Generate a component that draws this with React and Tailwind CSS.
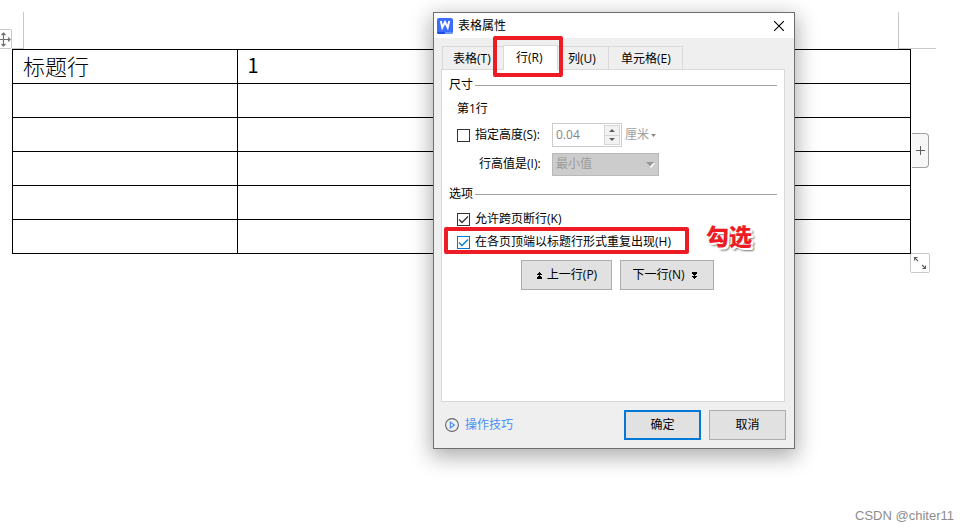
import React from 'react';

const rows = [['标题行', '1', '', ''], ['', '', '', ''], ['', '', '', ''], ['', '', '', ''], ['', '', '', ''], ['', '', '', '']];

function CheckBox({ id, checked, blue }) {
  return (
    <span className="relative flex size-[13px] shrink-0">
      <input
        id={id}
        type="checkbox"
        defaultChecked={checked}
        className={`peer size-[13px] appearance-none border bg-white ${blue ? 'border-[#0078d7]' : 'border-[#333333]'}`}
      />
      <svg
        viewBox="0 0 13 13"
        className={`pointer-events-none absolute inset-0 hidden size-[13px] peer-checked:block ${blue ? 'text-[#0078d7]' : 'text-[#333333]'}`}
        fill="none"
        stroke="currentColor"
        strokeWidth="1.3"
      >
        <path d="M2 6.5 5 9.5 11 3.5" />
      </svg>
    </span>
  );
}

function SectionTitle({ children }) {
  return (
    <div className="flex h-4 items-center gap-0.5">
      <h2>{children}</h2>
      <span className="h-px flex-1 bg-[#a0a0a0]" />
    </div>
  );
}

function Tab({ active, className, children }) {
  return (
    <button
      type="button"
      role="tab"
      aria-selected={!!active}
      className={`flex items-center whitespace-nowrap border-[#d9d9d9] ${
        active ? 'relative -mb-px h-[25px] border border-b-0 bg-white' : 'h-[23px] border-t bg-[#efefef] pt-0.5'
      } ${className}`}
    >
      {children}
    </button>
  );
}

function DoubleArrow({ down }) {
  return (
    <svg viewBox="0 0 7 7" className={`size-[7px] ${down ? 'rotate-180' : ''}`} fill="#000000" shapeRendering="crispEdges">
      <path d="M3 0H4V1H5V2H6V3H4V4H5V5H6V6H1V5H2V4H3V3H1V2H2V1H3ZM1 6H6V7H1Z" />
    </svg>
  );
}

function Dialog() {
  return (
    <section
      role="dialog"
      aria-label="表格属性"
      className="absolute top-3 left-[433px] flex w-[362px] flex-col border border-[#6e6e6e] bg-[#efefef] text-xs leading-4 text-black shadow-[0_6px_20px_2px_rgba(0,0,0,0.32)]"
    >
      <header className="flex h-[25px] items-center bg-white pl-[3px] pr-2.5">
        <svg viewBox="0 0 16 16" className="size-4">
          <rect width="16" height="16" rx="2" fill="#3c6cff" />
          <path d="M0 14H8V16H2Q0 16 0 14Z" fill="#1a4ee0" />
          <path d="M8 14H16Q16 16 14 16H8Z" fill="#6c95ff" />
          <path d="M3.8 3 5.3 9.6 8 4 10.7 9.6 12.2 3" fill="none" stroke="#ffffff" strokeWidth="2" />
        </svg>
        <h1 className="ml-[5px] flex-1">表格属性</h1>
        <button type="button" aria-label="关闭">
          <svg viewBox="0 0 10 10" className="size-2.5" fill="none" stroke="#000000" strokeWidth="1.1">
            <path d="M0 0 10 10M10 0 0 10" />
          </svg>
        </button>
      </header>

      <div className="px-[7px] pt-[7px]">
        <div role="tablist" className="relative flex items-end pl-px">
          <Tab className="w-[61px] border-l pl-2.5">表格(T)</Tab>
          <Tab active className="w-[55px] pl-3">行(R)</Tab>
          <Tab className="w-[51px] border-r pl-2.5">列(U)</Tab>
          <Tab className="w-[74px] border-r pl-3">单元格(E)</Tab>
          <span className="pointer-events-none absolute -top-[9px] left-[52px] z-10 h-[41px] w-[70px] rounded-[2px] border-4 border-[#ed1c24]" />
        </div>

        <div className="mr-0.5 h-[333px] border border-[#d9d9d9] bg-white px-[7px] pt-[7px]">
          <SectionTitle>尺寸</SectionTitle>
          <p className="mt-2 pl-2">第1行</p>
          <div className="mt-1.5 flex h-6 items-center pl-2">
            <CheckBox id="height" />
            <label htmlFor="height" className="ml-[5px] w-[77px] whitespace-nowrap">指定高度(S):</label>
            <div className="flex h-6 w-[70px] border border-[#cccccc] bg-white p-px">
              <input disabled aria-label="高度" defaultValue="0.04" className="w-full min-w-0 pl-0.5 text-[#838383]" />
              <div className="flex w-4 shrink-0 flex-col">
                <button type="button" disabled aria-label="增加" className="flex flex-1 items-center justify-center border border-[#d6d6d6] bg-[#f2f2f2]">
                  <svg viewBox="0 0 6 3" className="h-[3px] w-1.5" fill="#606060"><path d="M0 3 3 0 6 3Z" /></svg>
                </button>
                <button type="button" disabled aria-label="减少" className="flex flex-1 items-center justify-center border border-t-0 border-[#d6d6d6] bg-[#f2f2f2]">
                  <svg viewBox="0 0 6 3" className="h-[3px] w-1.5" fill="#606060"><path d="M0 0 3 3 6 0Z" /></svg>
                </button>
              </div>
            </div>
            <button type="button" disabled className="ml-[3px] flex items-center gap-0.5 text-[#a0a0a0]">
              厘米
              <svg viewBox="0 0 5 3" className="h-[3px] w-[5px]" fill="#888888"><path d="M0 0 2.5 3 5 0Z" /></svg>
            </button>
          </div>
          <div className="mt-[5px] flex h-6 items-center pl-[30px]">
            <label htmlFor="rule" className="w-[73px] whitespace-nowrap">行高值是(I):</label>
            <span className="relative">
              <select id="rule" disabled className="block h-[23px] w-[107px] appearance-none border border-[#b9b9b9] bg-[#cccccc] pl-[3px] text-[#9a9a9a] opacity-100">
                <option>最小值</option>
              </select>
              <svg viewBox="0 0 9 6" className="pointer-events-none absolute top-[9px] right-1 h-1.5 w-[9px]">
                <path d="M1 1H9L5 6Z" fill="#ffffff" />
                <path d="M0 0H8L4 4.5Z" fill="#969696" />
              </svg>
            </span>
          </div>
          <div className="mt-2.5">
            <SectionTitle>选项</SectionTitle>
          </div>
          <div className="mt-[9px] flex h-4 items-center gap-[5px] pl-2">
            <CheckBox id="break" checked />
            <label htmlFor="break">允许跨页断行(K)</label>
          </div>
          <div className="relative mt-[7px] flex h-4 items-center gap-[5px] pl-2">
            <CheckBox id="repeat" checked blue />
            <label htmlFor="repeat" className="whitespace-nowrap">在各页顶端以标题行形式重复出现(H)</label>
            <span className="pointer-events-none absolute -top-[7px] -left-[5px] h-[27px] w-[245px] rounded-[2px] border-4 border-[#ed1c24]" />
            <strong className="absolute -top-3.5 left-[257px] whitespace-nowrap text-[23px] leading-8 font-black text-[#ed1c24] [text-shadow:0_0_2px_#fff,1px_1px_0_#fff,2px_2px_0_#fff,3px_3px_2px_#777]">
              勾选
            </strong>
          </div>
          <div className="mt-2.5 flex gap-2 pl-[72px]">
            <button type="button" className="flex h-[30px] w-[91px] items-center justify-center gap-1 border border-[#adadad] bg-[#e1e1e1]">
              <DoubleArrow /> 上一行(P)
            </button>
            <button type="button" className="flex h-[30px] w-[94px] items-center justify-center gap-1.5 border border-[#adadad] bg-[#e1e1e1] pr-1">
              下一行(N) <DoubleArrow down />
            </button>
          </div>
        </div>
      </div>

      <footer className="flex items-center gap-2 px-2 pt-2 pb-2">
        <a href="#tips" className="ml-[3px] mr-auto flex items-center gap-1.5 text-[#4a90f5]">
          <svg viewBox="0 0 14 14" className="size-3.5" fill="none">
            <circle cx="7" cy="7" r="6.4" stroke="#66696f" strokeWidth="1.1" />
            <path d="M5.3 4.1 9.4 7 5.3 9.9Z" stroke="#3f8bf5" strokeWidth="1.1" />
          </svg>
          操作技巧
        </a>
        <button type="button" className="h-[30px] w-[77px] border-2 border-[#0078d7] bg-[#e1e1e1]">确定</button>
        <button type="button" className="h-[30px] w-[77px] border border-[#adadad] bg-[#e1e1e1]">取消</button>
      </footer>
    </section>
  );
}

export default function App() {
  return (
    <main className="relative flex min-h-screen flex-col overflow-hidden bg-white font-['Open_Sans','Noto_Sans_CJK_SC',sans-serif]">
      <div className="flex h-[49px] items-end justify-between pr-[33px]">
        <div className="flex items-end">
          <button type="button" aria-label="移动表格" className="flex h-5 w-3 items-center justify-end rounded-r-[2px] border border-l-0 border-[#c8c8c8]">
            <svg viewBox="0 0 15 15" className="h-[15px] w-[15px] shrink-0" fill="none" stroke="#707070" strokeWidth="1.2">
              <path d="M7.5 1V14M1 7.5H14M5.5 3 7.5 1 9.5 3M5.5 12 7.5 14 9.5 12M3 5.5 1 7.5 3 9.5M12 5.5 14 7.5 12 9.5" />
            </svg>
          </button>
          <span className="h-[37px] w-3 border-r border-b border-[#c8c8c8]" />
        </div>
        <span className="h-[37px] w-[38px] border-b border-l border-[#c8c8c8]" />
      </div>

      <div className="relative mr-[58px] ml-3">
        <table className="w-full table-fixed border-collapse text-black">
          <tbody>
            {rows.map((row, r) => (
              <tr key={r} className="h-[34px]">
                {row.map((cell, c) => (
                  <td
                    key={c}
                    className={`border border-black py-0 pl-2.5 leading-6 ${
                      c === 0 ? "pb-1 font-['Noto_Sans_CJK_SC',sans-serif] text-[22px] font-light" : "pb-1 font-['Noto_Sans_CJK_SC',sans-serif] text-xl"
                    }`}
                  >
                    {cell}
                  </td>
                ))}
              </tr>
            ))}
          </tbody>
        </table>
        <button type="button" aria-label="添加列" className="absolute top-[84px] -right-[18px] flex h-[35px] w-[17px] items-center justify-center rounded-r border border-l-0 border-[#a0a0a0] bg-[#f7f7f7]">
          <svg viewBox="0 0 9 9" className="size-[9px]" stroke="#606060"><path d="M4.5 0V9M0 4.5H9" /></svg>
        </button>
        <button type="button" aria-label="调整表格大小" className="absolute top-[204px] -right-[19px] flex size-5 items-center justify-center rounded-[2px] border border-[#c8c8c8] bg-white">
          <svg viewBox="0 0 14 14" className="size-3.5" fill="none" stroke="#606060" strokeWidth="1.1">
            <path d="M1.5 4.5V1.5H4.5M1.5 1.5 5 5M12.5 9.5V12.5H9.5M12.5 12.5 9 9" />
            <path d="M1 1H4L1 4ZM13 13H10L13 10Z" fill="#606060" stroke="none" />
          </svg>
        </button>
      </div>

      <Dialog />

      <p className="mt-auto mr-[15px] mb-1 text-right font-['Liberation_Sans',sans-serif] text-[13px] leading-5 text-[#8c8c8c]">CSDN @chiter11</p>
    </main>
  );
}
